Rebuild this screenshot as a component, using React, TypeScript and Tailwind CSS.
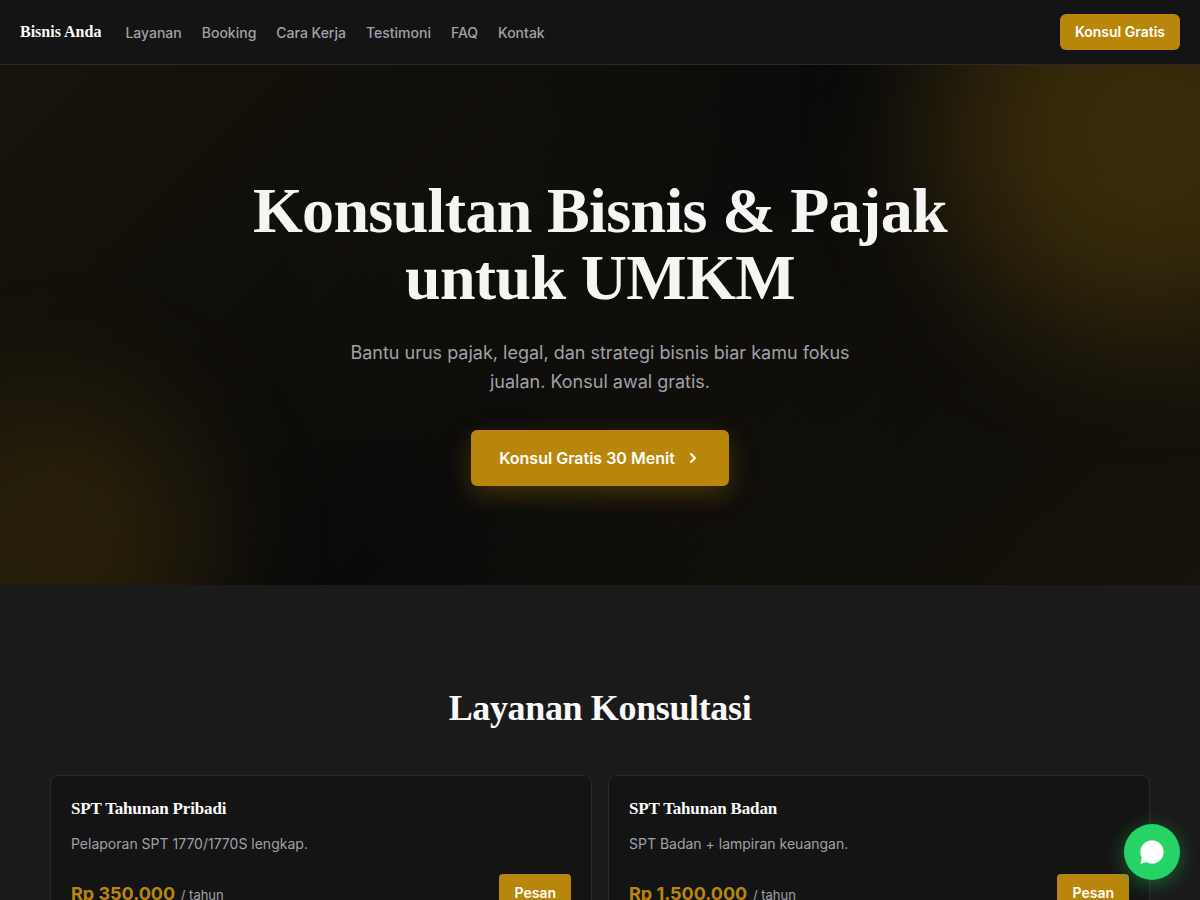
import React from 'react';
import { ChevronRight } from 'lucide-react';

const links = [
  { label: 'Layanan', href: '#layanan' },
  { label: 'Booking', href: '#booking' },
  { label: 'Cara Kerja', href: '#cara-kerja' },
  { label: 'Testimoni', href: '#testimoni' },
  { label: 'FAQ', href: '#faq' },
  { label: 'Kontak', href: '#kontak' },
];

const services = [
  { name: 'SPT Tahunan Pribadi', text: 'Pelaporan SPT 1770/1770S lengkap.', price: 'Rp 350.000', unit: '/ tahun' },
  { name: 'SPT Tahunan Badan', text: 'SPT Badan + lampiran keuangan.', price: 'Rp 1.500.000', unit: '/ tahun' },
];

function Header() {
  return (
    <header className="sticky top-0 z-20 flex h-[65px] items-center justify-between border-b border-[#2a2a2a] bg-[#141414] px-5">
      <div className="flex items-center gap-6">
        <a href="#top" className="font-['Liberation_Serif',serif] text-base leading-6 font-bold text-[#fafafa]">
          Bisnis Anda
        </a>
        <nav className="flex items-center gap-5 pt-px">
          {links.map((l) => (
            <a key={l.label} href={l.href} className="text-sm font-medium text-[#a1a1aa]">
              {l.label}
            </a>
          ))}
        </nav>
      </div>
      <a href="#booking" className="flex h-9 items-center rounded-md bg-[#b8860b] px-[15px] text-sm font-semibold text-white">
        Konsul Gratis
      </a>
    </header>
  );
}

function Hero() {
  return (
    <section
      id="top"
      className="relative overflow-hidden bg-[#0a0a0a] bg-[radial-gradient(circle_at_50%_50%,rgba(184,134,11,0.03)_0%,transparent_340px),linear-gradient(135deg,rgba(184,134,11,0.08)_0%,transparent_50%,rgba(184,134,11,0.07)_100%)] px-5 pt-28 pb-[99px] text-center"
    >
      <div className="absolute -top-[160px] -right-[160px] size-[440px] rounded-full bg-[radial-gradient(closest-side,rgba(184,134,11,0.29),rgba(184,134,11,0.17))] blur-[60px]" />
      <div className="absolute -bottom-[120px] -left-[100px] size-[320px] rounded-full bg-[radial-gradient(closest-side,rgba(184,134,11,0.19),rgba(184,134,11,0.1))] blur-[60px]" />
      <div className="relative flex flex-col items-center">
        <h1 className="max-w-[800px] font-['Liberation_Serif',serif] text-[64px] leading-[67px] font-bold tracking-[-0.01em] text-[#f5f5f4]">
          Konsultan Bisnis &amp; Pajak untuk UMKM
        </h1>
        <p className="mt-[27px] max-w-[520px] text-lg leading-[29px] text-[#a1a1aa]">
          Bantu urus pajak, legal, dan strategi bisnis biar kamu fokus jualan. Konsul awal gratis.
        </p>
        <a
          href="#booking"
          className="mt-[34px] flex h-14 items-center gap-2.5 rounded-md bg-[#b8860b] px-7 text-base font-semibold text-white shadow-[0_8px_24px_rgba(184,134,11,0.3)]"
        >
          Konsul Gratis 30 Menit
          <ChevronRight className="size-4" strokeWidth={3} />
        </a>
      </div>
    </section>
  );
}

function Services() {
  return (
    <section id="layanan" className="px-5 py-[100px]">
      <div className="mx-auto max-w-[1100px]">
        <h2 className="text-center font-['Liberation_Serif',serif] text-4xl leading-[46px] font-bold tracking-[-0.01em] text-[#fafafa]">
          Layanan Konsultasi
        </h2>
        <div className="mt-11 grid grid-cols-2 gap-4">
          {services.map((s) => (
            <article key={s.name} className="rounded-lg border border-[#2a2a2a] bg-[#141414] p-5">
              <h3 className="font-['Liberation_Serif',serif] text-[17px] leading-[26px] font-bold tracking-[-0.01em] text-[#fafafa]">
                {s.name}
              </h3>
              <p className="mt-2.5 text-sm leading-6 text-[#a1a1aa]">{s.text}</p>
              <div className="mt-[18px] flex items-center justify-between">
                <p className="pt-0.5 text-[13px] text-[#a1a1aa]">
                  <strong className="mr-0.5 text-lg font-bold text-[#b8860b]">{s.price}</strong> {s.unit}
                </p>
                <a href="#booking" className="flex h-[38px] items-center rounded bg-[#b8860b] px-[15px] text-sm font-semibold text-white">
                  Pesan
                </a>
              </div>
            </article>
          ))}
        </div>
      </div>
    </section>
  );
}

export default function App() {
  return (
    <div className="h-screen overflow-hidden bg-[#1a1a1a] font-['Inter',sans-serif]">
      <Header />
      <main>
        <Hero />
        <Services />
      </main>
      <a
        href="#kontak"
        aria-label="WhatsApp"
        className="fixed right-5 bottom-5 z-30 flex size-14 items-center justify-center rounded-full bg-[#25d366] text-white shadow-[0_4px_20px_rgba(37,211,102,0.4)]"
      >
        <svg viewBox="0 0 24 24" className="size-7" fill="currentColor" aria-hidden="true">
          <path d="M12 2C6.48 2 2 6.48 2 12c0 1.75.45 3.4 1.24 4.83L2 22l5.17-1.24A9.96 9.96 0 0 0 12 22c5.52 0 10-4.48 10-10S17.52 2 12 2Z" />
        </svg>
      </a>
    </div>
  );
}
